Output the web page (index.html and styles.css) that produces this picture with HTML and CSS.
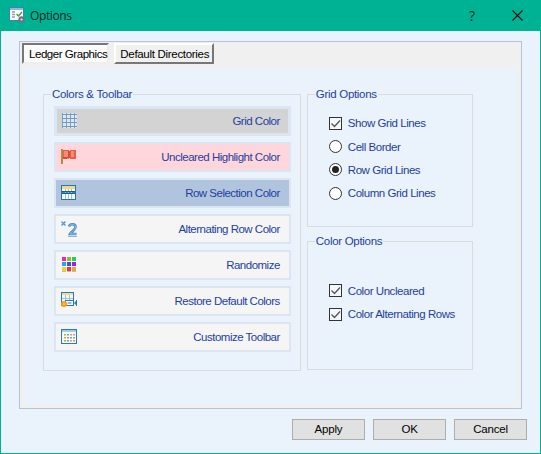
FILE: index.html
```html
<!DOCTYPE html>
<html lang="en">
<head>
  <meta charset="UTF-8">
  <title>Options</title>
  <link rel="stylesheet" href="styles.css">
</head>
<body>
  <div class="window">
    <div class="titlebar">
      <svg class="title-icon" width="17" height="17" viewBox="0 0 17 17">
        <rect x="0.5" y="0.5" width="14" height="13" fill="#fff" stroke="#3f7fc0"/>
        <rect x="1" y="1" width="13" height="2" fill="#8fb8e0"/>
        <path d="M3 5h3M3 7.5h3M3 10h3" stroke="#8aa0b8" stroke-width="1.4"/>
        <path d="M7.5 7l2 2 3.5-4" stroke="#4a9a3a" stroke-width="1.3" fill="none"/>
        <circle cx="12.5" cy="12.5" r="3.2" fill="#6d7680"/>
        <circle cx="12.5" cy="12.5" r="1.1" fill="#dfe4ea"/>
      </svg>
      <span class="title-text">Options</span>
      <span class="title-help">?</span>
      <svg class="title-close" width="11" height="11" viewBox="0 0 11 11">
        <path d="M0.5 0.5l10 10M10.5 0.5l-10 10" stroke="#111" stroke-width="1.1"/>
      </svg>
    </div>

    <div class="panel">
      <div class="tabs">
        <div class="tab tab-active">Ledger Graphics</div>
        <div class="tab tab-dirs">Default Directories</div>
      </div>
      <div class="page">
        <fieldset class="group group-colors">
          <legend>Colors &amp; Toolbar</legend>
          <div class="color-btn btn-grid">
            <svg class="btn-icon" width="17" height="17" viewBox="0 0 17 17">
              <rect x="2" y="1" width="15" height="15" fill="#dbe7f2"/>
              <path d="M2.500 1v15M6.500 1v15M10.500 1v15M14.500 1v15" stroke="#6fa4d4" fill="none"/>
              <path d="M2 2.500h15M2 6.500h15M2 10.500h15M2 14.500h15" stroke="#7f97ad" fill="none"/>
            </svg>
            <span>Grid Color</span>
          </div>
          <div class="color-btn btn-uncleared">
            <svg class="btn-icon" width="17" height="17" viewBox="0 0 17 17">
              <rect x="1" y="1" width="2" height="15" fill="#b58a45"/>
              <path d="M3 2h6v1h1v-1h6v9h-6v-1h-3v1h-4z" fill="#e8604a"/>
              <path d="M4 3h4v6h-4zM11 3h3v6h-3z" fill="#f58a72"/>
              <path d="M9 3v7M3 10h6" stroke="#b93a2a" fill="none"/>
            </svg>
            <span>Uncleared Highlight Color</span>
          </div>
          <div class="color-btn btn-selection">
            <svg class="btn-icon" width="17" height="17" viewBox="0 0 17 17">
              <rect x="1.500" y="1.500" width="14" height="14" fill="#fff" stroke="#1f78b4"/>
              <rect x="2" y="2" width="13" height="3" fill="#f6d880"/>
              <rect x="2" y="7" width="13" height="3" fill="#2f88c8"/>
              <path d="M5.500 5v10M8.500 5v10M11.500 5v10" stroke="#9cc4e0"/>
              <path d="M2 7.500h13M2 9.500h13" stroke="#15608f"/>
            </svg>
            <span>Row Selection Color</span>
          </div>
          <div class="color-btn">
            <svg class="btn-icon" width="17" height="17" viewBox="0 0 17 17">
              <path d="M1.500 1.500l4 4M5.500 1.500l-4 4" stroke="#5a9ad0" stroke-width="1.500"/>
              <path d="M9 6.500c1-3 6.500-3 6.500 .5 0 3-4 4-5.500 7h6.500" fill="none" stroke="#4a8ac4" stroke-width="2.600"/>
              <path d="M9 6.500c1-3 6.500-3 6.500 .5 0 3-4 4-5.500 7h6.500" fill="none" stroke="#8cc0ec" stroke-width="1"/>
              <path d="M8 16.500h9" stroke="#9ab0c4"/>
            </svg>
            <span>Alternating Row Color</span>
          </div>
          <div class="color-btn">
            <svg class="btn-icon" width="17" height="17" viewBox="0 0 17 17">
              <rect x="2" y="1" width="4" height="4" fill="#f01fd0"/>
              <rect x="7" y="1" width="4" height="4" fill="#8fc01f"/>
              <rect x="12" y="1" width="4" height="4" fill="#1fd05a"/>
              <rect x="2" y="6" width="4" height="4" fill="#1fa8f0"/>
              <rect x="7" y="6" width="4" height="4" fill="#3f4fe0"/>
              <rect x="12" y="6" width="4" height="4" fill="#a01fe0"/>
              <rect x="2" y="11" width="4" height="4" fill="#f5d020"/>
              <rect x="7" y="11" width="4" height="4" fill="#e83a30"/>
              <rect x="12" y="11" width="4" height="4" fill="#f5a030"/>
              <path d="M2 15.500h4M7 15.500h4M12 15.500h4" stroke="#b8bcc0"/>
            </svg>
            <span>Randomize</span>
          </div>
          <div class="color-btn">
            <svg class="btn-icon" width="17" height="17" viewBox="0 0 17 17">
              <rect x="1.500" y="0.500" width="12" height="13" fill="#f4f8fc" stroke="#2a7cae"/>
              <rect x="2" y="1" width="11" height="2" fill="#f3dc9a"/>
              <path d="M5.500 3v8M9.500 3v8M2 6.500h11" stroke="#9cc4e0"/>
              <rect x="5.500" y="8.500" width="8" height="5" fill="#fff" stroke="#2a7cae"/>
              <path d="M7.500 11h4" stroke="#2a7cae"/>
              <path d="M14 11l2.500-2.500v5z" fill="#2a7cae"/>
              <path d="M16.500 8v6" stroke="#2a7cae"/>
              <circle cx="4" cy="12" r="3" fill="#f59a20"/>
              <circle cx="4" cy="12" r="1.200" fill="#f9c030"/>
            </svg>
            <span>Restore Default Colors</span>
          </div>
          <div class="color-btn">
            <svg class="btn-icon" width="17" height="17" viewBox="0 0 17 17">
              <rect x="1.500" y="1.500" width="15" height="14" fill="#f8fbfe" stroke="#2a7cae"/>
              <rect x="2" y="2" width="14" height="2" fill="#a8cbe4"/>
              <path d="M4 6h2v1.500h-2z" fill="#9ab82f"/>
              <path d="M7 6h2v1.500h-2z" fill="#4fa8e0"/>
              <path d="M10 6h2v1.500h-2z" fill="#f59a40"/>
              <path d="M13 6h2v1.500h-2z" fill="#b49ae0"/>
              <path d="M4 9h2v1.500h-2z" fill="#f59a40"/>
              <path d="M7 9h2v1.500h-2z" fill="#f07a40"/>
              <path d="M10 9h2v1.500h-2z" fill="#4fa8e0"/>
              <path d="M13 9h2v1.500h-2z" fill="#9ab82f"/>
              <path d="M4 12h2v1.500h-2z" fill="#9ab82f"/>
              <path d="M7 12h2v1.500h-2z" fill="#4fa8e0"/>
              <path d="M10 12h2v1.500h-2z" fill="#f59a40"/>
              <path d="M13 12h2v1.500h-2z" fill="#b49ae0"/>
            </svg>
            <span>Customize Toolbar</span>
          </div>
        </fieldset>

        <div class="side">
          <fieldset class="group group-grid">
            <legend>Grid Options</legend>
            <div class="opt">
              <span class="check"><svg width="11" height="11" viewBox="0 0 11 11"><path d="M1.500 5.500l3 3 5.500-6" fill="none" stroke="#555" stroke-width="1.300"/></svg></span>
              Show Grid Lines
            </div>
            <div class="opt"><span class="radio"></span>Cell Border</div>
            <div class="opt"><span class="radio radio-on"></span>Row Grid Lines</div>
            <div class="opt"><span class="radio"></span>Column Grid Lines</div>
          </fieldset>
          <fieldset class="group group-color-opts">
            <legend>Color Options</legend>
            <div class="opt">
              <span class="check"><svg width="11" height="11" viewBox="0 0 11 11"><path d="M1.500 5.500l3 3 5.500-6" fill="none" stroke="#555" stroke-width="1.300"/></svg></span>
              Color Uncleared
            </div>
            <div class="opt">
              <span class="check"><svg width="11" height="11" viewBox="0 0 11 11"><path d="M1.500 5.500l3 3 5.500-6" fill="none" stroke="#555" stroke-width="1.300"/></svg></span>
              Color Alternating Rows
            </div>
          </fieldset>
        </div>
      </div>
    </div>

    <div class="footer">
      <div class="dlg-btn">Apply</div>
      <div class="dlg-btn">OK</div>
      <div class="dlg-btn">Cancel</div>
    </div>
  </div>
</body>
</html>
```

FILE: styles.css
```css
html, body {
  margin: 0;
  padding: 0;
}
body {
  font-family: "Liberation Sans", Arial, sans-serif;
  font-size: 11.5px;
  background: #eaf2fb;
}
.window {
  box-sizing: border-box;
  width: 541px;
  height: 454px;
  border: 1px solid #00b294;
  border-top: 0;
  display: flex;
  flex-direction: column;
}
.titlebar {
  height: 31px;
  flex: none;
  background: #00b294;
  display: flex;
  align-items: center;
  color: #0a1f1a;
}
.title-icon {
  margin-left: 8px;
  margin-right: 4px;
}
.title-text {
  font-family: "Open Sans", sans-serif;
  font-size: 12px;
  letter-spacing: -0.4px;
  flex: 1;
}
.title-help {
  font-family: "Open Sans", sans-serif;
  font-size: 14px;
  margin-right: 37px;
}
.title-close {
  margin-right: 17px;
}

.panel {
  box-sizing: border-box;
  flex: none;
  height: 368px;
  margin: 10px 18px 0;
  border: 1px solid #b3c3dc;
  background: #f0f0f0;
  padding: 1px 4px 4px;
  display: flex;
  flex-direction: column;
}
.tabs {
  height: 25px;
  flex: none;
  display: flex;
  gap: 5px;
  margin-left: -2px;
}
.tab {
  box-sizing: border-box;
  height: 21px;
  padding: 0 0 0 5px;
  line-height: 18px;
  color: #000;
  background: #f0f0f0;
  border: 2px solid;
  border-color: #fff #777 #777 #fff;
  letter-spacing: -0.45px;
}
.tab-dirs {
  padding: 0 3px 0 4px;
  letter-spacing: -0.3px;
}
.tab-active {
  background: #fbfbfb;
  border-color: #777 #eee #eee #777;
}
.page {
  flex: 1;
  background: #eaf2fb;
  padding: 19px 44px 0 19px;
  display: flex;
  gap: 6px;
  align-items: flex-start;
}

.group {
  margin: 0;
  border: 1px solid #d9dbdd;
  min-width: 0;
  box-sizing: border-box;
}
.group legend {
  padding: 0 1px;
  color: #1f3f9f;
  letter-spacing: -0.3px;
  line-height: 14px;
}
.group-colors {
  width: 259px;
  height: 284px;
  padding: 5px 9px 0 7px;
  display: flex;
  flex-direction: column;
  gap: 6px;
}
.color-btn {
  box-sizing: border-box;
  height: 30px;
  flex: none;
  margin-left: 3px;
  border: 2px solid #dce6f2;
  background: #f5f5f5;
  display: flex;
  align-items: center;
  justify-content: space-between;
  padding: 0 9px 0 4px;
  color: #1f3f9f;
  letter-spacing: -0.5px;
}
.btn-icon {
  margin-top: -1px;
}
.btn-grid {
  border-width: 3px;
  background: #d3d3d3;
  padding: 0 8px 0 3px;
}
.btn-uncleared {
  background: #ffd6dc;
}
.btn-selection {
  background: #b0c4de;
}

.side {
  display: flex;
  flex-direction: column;
  gap: 7px;
  width: 167px;
}
.group-grid {
  height: 140px;
  padding: 10.500px 0 0 7px;
}
.group-color-opts {
  height: 136px;
  padding: 31px 0 0 7px;
}
.opt {
  height: 23.400px;
  margin-left: 14px;
  display: flex;
  align-items: center;
  color: #1f3f9f;
  letter-spacing: -0.45px;
}
.check {
  box-sizing: border-box;
  width: 13px;
  height: 13px;
  border: 1px solid #333;
  background: #f4f8fc;
  margin-right: 6px;
  display: flex;
  align-items: center;
  justify-content: center;
  flex: none;
}
.radio {
  box-sizing: border-box;
  width: 13px;
  height: 13px;
  border: 1px solid #333;
  border-radius: 50%;
  background: #fff;
  margin-right: 6px;
  flex: none;
  display: flex;
  align-items: center;
  justify-content: center;
}
.radio-on::after {
  content: "";
  width: 7px;
  height: 7px;
  border-radius: 50%;
  background: #222;
}

.footer {
  flex: 1;
  display: flex;
  justify-content: flex-end;
  gap: 8px;
  padding: 10px 13px 0 0;
}
.dlg-btn {
  box-sizing: border-box;
  width: 73px;
  height: 21px;
  line-height: 19px;
  text-align: center;
  background: #e1e1e1;
  border: 1px solid #adadad;
  color: #000;
  letter-spacing: -0.2px;
}
```
